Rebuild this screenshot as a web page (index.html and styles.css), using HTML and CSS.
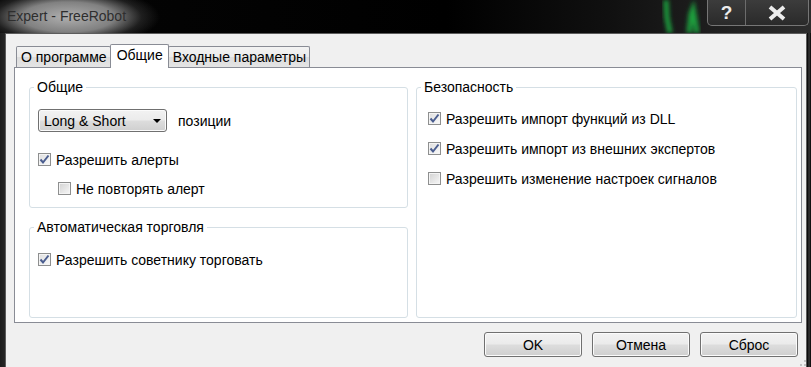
FILE: index.html
```html
<!DOCTYPE html>
<html lang="ru">
<head>
    <meta charset="UTF-8">
    <meta name="viewport" content="width=device-width, initial-scale=1.0">
    <title>Expert - FreeRobot</title>
    <link rel="stylesheet" href="styles.css">
</head>
<body>

<div class="window">
    <div class="titlebar">
        <span class="title">Expert - FreeRobot</span>
        <!-- chart lines showing through the glass -->
        <svg class="chart" width="60" height="33" viewBox="0 0 60 33">
            <defs>
                <filter id="soft"><feGaussianBlur stdDeviation="2"/></filter>
            </defs>
            <g filter="url(#soft)" stroke="#1e9e3e" stroke-width="5" fill="none">
                <path d="M13 0 L14 18 L17 33"/>
                <path d="M36 33 L38 14 L40 9 L42 20 L44 33"/>
            </g>
        </svg>
        <div class="caption-buttons">
            <div class="cap-btn help">?</div>
            <div class="cap-btn close">
                <svg width="22" height="16" viewBox="0 0 22 16">
                    <path d="M4 2 L18 14 M18 2 L4 14" stroke="#ececec" stroke-width="4" fill="none"/>
                </svg>
            </div>
        </div>
    </div>

    <div class="frame">
        <div class="client">
            <div class="tabs">
                <div class="tab">О программе</div>
                <div class="tab active">Общие</div>
                <div class="tab">Входные параметры</div>
            </div>

            <div class="panel">
                <fieldset class="group group-main">
                    <legend>Общие</legend>
                    <div class="select-row">
                        <div class="select">Long &amp; Short <span class="arrow"></span></div>
                        <span>позиции</span>
                    </div>
                    <div class="check first">
                        <span class="box on"><svg width="11" height="11" viewBox="0 0 11 11"><path d="M1.5 5.5 L4 8.5 L9.5 1.5" stroke="#4a5d8f" stroke-width="2" fill="none"/></svg></span>
                        Разрешить алерты
                    </div>
                    <div class="check sub">
                        <span class="box"></span>
                        Не повторять алерт
                    </div>
                </fieldset>

                <fieldset class="group group-security">
                    <legend>Безопасность</legend>
                    <div class="check">
                        <span class="box on"><svg width="11" height="11" viewBox="0 0 11 11"><path d="M1.5 5.5 L4 8.5 L9.5 1.5" stroke="#4a5d8f" stroke-width="2" fill="none"/></svg></span>
                        Разрешить импорт функций из DLL
                    </div>
                    <div class="check">
                        <span class="box on"><svg width="11" height="11" viewBox="0 0 11 11"><path d="M1.5 5.5 L4 8.5 L9.5 1.5" stroke="#4a5d8f" stroke-width="2" fill="none"/></svg></span>
                        Разрешить импорт из внешних экспертов
                    </div>
                    <div class="check">
                        <span class="box"></span>
                        Разрешить изменение настроек сигналов
                    </div>
                </fieldset>

                <fieldset class="group group-trade">
                    <legend>Автоматическая торговля</legend>
                    <div class="check">
                        <span class="box on"><svg width="11" height="11" viewBox="0 0 11 11"><path d="M1.5 5.5 L4 8.5 L9.5 1.5" stroke="#4a5d8f" stroke-width="2" fill="none"/></svg></span>
                        Разрешить советнику торговать
                    </div>
                </fieldset>
            </div>

            <div class="buttons">
                <div class="btn">OK</div>
                <div class="btn">Отмена</div>
                <div class="btn">Сброс</div>
            </div>

            <svg class="grip" width="6" height="6" viewBox="0 0 6 6">
                <rect x="4" y="0" width="2" height="2" fill="#c4c4c4"/>
                <rect x="0" y="4" width="2" height="2" fill="#c4c4c4"/>
                <rect x="4" y="4" width="2" height="2" fill="#c4c4c4"/>
            </svg>
        </div>
    </div>
</div>

</body>
</html>
```

FILE: styles.css
```css
body {
    margin: 0;
    padding: 0;
    background-color: #000;
    font-family: "Liberation Sans", Arial, sans-serif;
    font-size: 14px;
    color: #000;
    overflow: hidden;
}

.window {
    width: 811px;
    height: 367px;
    display: flex;
    flex-direction: column;
}

/* title bar */

.titlebar {
    position: relative;
    flex: none;
    height: 33px;
    display: flex;
    background: linear-gradient(to right, #050505 0%, #000 55%, #101010 75%, #2c2c2c 100%);
}

.title {
    height: 33px;
    line-height: 33px;
    padding: 0 45px 0 7px;
    font-size: 14px;
    color: #2e2e2e;
    background: radial-gradient(ellipse 92px 30px at 68px 17px, rgba(185, 185, 185, 0.95) 0%, rgba(160, 160, 160, 0.8) 50%, rgba(80, 80, 80, 0.35) 80%, rgba(0, 0, 0, 0) 100%);
}

.chart {
    position: absolute;
    left: 653px;
    top: 0;
}

.caption-buttons {
    margin-left: auto;
    margin-right: 2px;
    height: 25px;
    display: flex;
    border: 1px solid #767676;
    border-top: none;
    border-radius: 0 0 5px 5px;
    background: linear-gradient(#3c3c3c, #2a2a2a);
    overflow: hidden;
}

.cap-btn {
    display: flex;
    align-items: center;
    justify-content: center;
}

.cap-btn.help {
    width: 37px;
    border-right: 1px solid #6c6c6c;
    font-size: 19px;
    font-weight: bold;
    color: #ececec;
}

.cap-btn.close {
    width: 62px;
}

/* window body */

.frame {
    flex: 1;
    display: flex;
    padding: 0 4px 0 5px;
    background: linear-gradient(to right, #1c1c1c 0, #262626 5px, #202020 806px, #050505 808px, #4a4a4a 809px, #111 810px);
}

.client {
    position: relative;
    flex: 1;
    background-color: #f0f0f0;
    border: 1px solid #5c5c5c;
    border-bottom: none;
    padding-top: 10px;
}

.tabs {
    position: relative;
    z-index: 1;
    display: flex;
    align-items: flex-end;
    height: 23px;
    margin-left: 11px;
}

.tab {
    height: 20px;
    line-height: 20px;
    margin-left: -1px;
    padding: 0 3px 0 4px;
    border: 1px solid #898c95;
    border-bottom: none;
    border-radius: 2px 2px 0 0;
    background: linear-gradient(#f3f3f3, #ebebeb 50%, #dddddd 50%, #e4e4e4);
}

.tab.active {
    height: 23px;
    line-height: 21px;
    margin-bottom: -1px;
    padding: 0 5px 0 6px;
    background: #fff;
}

.panel {
    box-sizing: border-box;
    height: 256px;
    margin: 0 4px 0 8px;
    padding: 12px 0 0 14px;
    border: 1px solid #898c95;
    background-color: #fff;
    display: grid;
    grid-template-columns: 379px 381px;
    grid-template-rows: 128px 98px;
    column-gap: 8px;
    row-gap: 12px;
}

.group {
    box-sizing: border-box;
    min-width: 0;
    margin: 0;
    padding: 0 8px;
    border: 1px solid #d5dfe5;
    border-radius: 3px;
}

.group legend {
    line-height: 14px;
    margin-left: -4px;
    padding: 0 3px;
}

.group-main {
    grid-column: 1;
    grid-row: 1;
    padding-top: 15px;
}

.group-trade {
    grid-column: 1;
    grid-row: 2;
    padding-top: 18px;
}

.group-security {
    grid-column: 2;
    grid-row: 1 / 3;
    padding-top: 17px;
}

.group-security .check {
    margin-left: 3px;
    margin-bottom: 15px;
}

.select-row {
    display: flex;
    align-items: center;
    gap: 11px;
}

.select {
    box-sizing: border-box;
    width: 129px;
    height: 23px;
    padding: 0 5px;
    display: flex;
    align-items: center;
    justify-content: space-between;
    border: 1px solid #707070;
    border-radius: 3px;
    background: linear-gradient(#f2f2f2, #ebebeb 48%, #dddddd 52%, #cfcfcf);
    box-shadow: inset 0 0 0 1px #fbfbfb;
}

.arrow {
    width: 0;
    height: 0;
    border-left: 4px solid transparent;
    border-right: 4px solid transparent;
    border-top: 4px solid #000;
}

.check {
    display: flex;
    align-items: center;
    gap: 5px;
    height: 15px;
}

.check.first {
    margin-top: 20px;
}

.check.sub {
    margin-top: 14px;
    margin-left: 20px;
}

.box {
    box-sizing: border-box;
    flex: none;
    width: 13px;
    height: 13px;
    display: flex;
    align-items: center;
    justify-content: center;
    border: 1px solid #8e8f8f;
    background: linear-gradient(135deg, #d2d2d2, #f7f7f7);
    box-shadow: inset 0 0 0 1px #f4f4f4;
}

.box.on {
    background: linear-gradient(135deg, #dedede, #fafafa);
}

/* dialog buttons */

.buttons {
    display: flex;
    justify-content: flex-end;
    gap: 10px;
    padding: 9px 8px 0 0;
}

.btn {
    box-sizing: border-box;
    width: 98px;
    height: 25px;
    display: flex;
    align-items: center;
    justify-content: center;
    border: 1px solid #707070;
    border-radius: 3px;
    background: linear-gradient(#f2f2f2, #ebebeb 48%, #dddddd 52%, #cfcfcf);
    box-shadow: inset 0 0 0 1px #fbfbfb;
}

.grip {
    position: absolute;
    right: 0;
    bottom: 1px;
}
```
